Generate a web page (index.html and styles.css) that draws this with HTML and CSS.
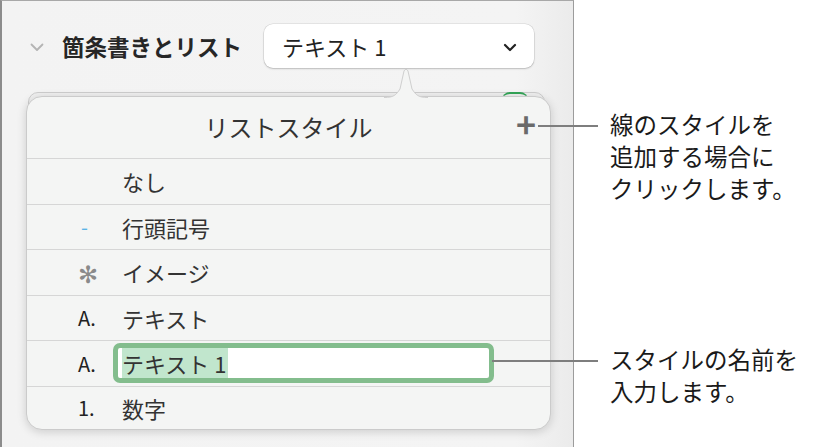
FILE: index.html
```html
<!DOCTYPE html>
<html lang="ja">
<head>
    <meta charset="UTF-8">
    <title>リストスタイル</title>
    <link rel="stylesheet" href="styles.css">
</head>
<body>

<div class="page">
    <div class="panel">
        <div class="header">
            <svg class="disclosure" width="14" height="9" viewBox="0 0 14 9">
                <path d="M1.5 1.5 L7 7 L12.5 1.5" fill="none" stroke="#b4b4b4" stroke-width="1.8" stroke-linecap="round" stroke-linejoin="round"/>
            </svg>
            <span class="section-title">箇条書きとリスト</span>
            <div class="popup">
                <span>テキスト 1</span>
                <svg width="14" height="9" viewBox="0 0 14 9">
                    <path d="M2 2 L7 7 L12 2" fill="none" stroke="#222" stroke-width="2.2" stroke-linecap="round" stroke-linejoin="round"/>
                </svg>
            </div>
        </div>
        <div class="behind"><span class="toggle"></span></div>

        <div class="popover">
            <svg class="arrow" width="44" height="30" viewBox="0 0 44 30">
                <path d="M0 29.5 C10 29.5 12 27 16 21 L20 3 Q22 -0.5 24 3 L28 21 C32 27 34 29.5 44 29.5" fill="#f4f5f4" stroke="#cfcfcf" stroke-width="1"/>
            </svg>
            <div class="pop-title">
                <span>リストスタイル</span>
                <span class="add">+</span>
            </div>
            <div class="row"><span class="marker"></span><span>なし</span></div>
            <div class="row"><span class="marker dash">-</span><span>行頭記号</span></div>
            <div class="row"><span class="marker star">✻</span><span>イメージ</span></div>
            <div class="row"><span class="marker">A.</span><span>テキスト</span></div>
            <div class="row editing">
                <span class="marker">A.</span>
                <div class="field"><span class="selected">テキスト 1</span></div>
            </div>
            <div class="row"><span class="marker">1.</span><span>数字</span></div>
        </div>
    </div>

    <div class="note note-add">
        <span class="leader" style="width: 60px"></span>
        <div class="note-text">
            <div>線のスタイルを</div>
            <div>追加する場合に</div>
            <div>クリックします。</div>
        </div>
    </div>
    <div class="note note-name">
        <span class="leader" style="width: 106px"></span>
        <div class="note-text">
            <div>スタイルの名前を</div>
            <div>入力します。</div>
        </div>
    </div>
</div>

</body>
</html>
```

FILE: styles.css
```css
body {
    margin: 0;
    background-color: #fff;
    font-family: "Noto Sans CJK JP", "Noto Sans", sans-serif;
    color: #222;
}

.page {
    position: relative;
    width: 825px;
    height: 447px;
    overflow: hidden;
}

.panel {
    position: relative;
    width: 574px;
    height: 447px;
    box-sizing: border-box;
    background: linear-gradient(to right, #f3f3f3 0%, #f4f4f4 90%, #ebebeb 100%);
    border-left: 2px solid #8c8c8c;
    border-top: 1px solid #a8a8a8;
    border-right: 1px solid #9c9c9c;
}

.header {
    display: flex;
    align-items: center;
    padding: 23px 0 0 28px;
    height: 44px;
}

.disclosure {
    margin-top: 2px;
}

.section-title {
    margin-left: 18px;
    font-size: 22.5px;
    font-weight: bold;
    color: #262626;
}

.popup {
    display: flex;
    align-items: center;
    justify-content: space-between;
    margin-left: 22px;
    width: 270px;
    height: 44px;
    box-sizing: border-box;
    padding: 0 17px 0 18px;
    background-color: #fff;
    border-radius: 9px;
    box-shadow: 0 0 0 0.5px rgba(0, 0, 0, 0.12), 0 1px 2px rgba(0, 0, 0, 0.18);
    font-size: 22px;
    color: #222;
}

.popup svg {
    margin-top: 3px;
}

.behind {
    position: relative;
    margin: 24px 28px 0 26px;
    height: 30px;
    border: 1px solid #cdcdcd;
    border-radius: 10px;
    background-color: #efefef;
}

.toggle {
    position: absolute;
    right: 16px;
    top: -1px;
    width: 26px;
    height: 10px;
    border-top: 2px solid #33a457;
    border-radius: 8px 8px 0 0;
}

.popover {
    position: absolute;
    left: 24px;
    top: 95px;
    width: 523px;
    background-color: #f4f5f4;
    border: 1px solid #cbcbcb;
    border-radius: 16px;
    box-shadow: 0 2px 10px rgba(0, 0, 0, 0.16);
}

.arrow {
    position: absolute;
    left: 357px;
    top: -29px;
}

.pop-title {
    position: relative;
    display: flex;
    align-items: center;
    justify-content: center;
    height: 59px;
    padding-bottom: 2px;
    font-size: 24px;
    color: #333;
}

.add {
    position: absolute;
    right: 14px;
    top: 10px;
    font-size: 34px;
    font-weight: bold;
    line-height: 34px;
    color: #6a6a6a;
}

.row {
    display: flex;
    align-items: center;
    height: 44.5px;
    padding-left: 51px;
    border-top: 1px solid #d6d6d6;
    font-size: 22px;
    color: #333;
}

.row:last-child {
    height: 42px;
}

.marker {
    width: 44px;
    font-size: 20px;
    color: #222;
}

.dash {
    color: #5ab4e6;
    padding-left: 3px;
    box-sizing: border-box;
}

.star {
    font-size: 24px;
    color: #8a8a8a;
}

.editing .marker {
    width: 35px;
}

.field {
    display: flex;
    align-items: center;
    width: 381px;
    height: 40px;
    box-sizing: border-box;
    padding-left: 4px;
    background-color: #fff;
    border: 5px solid #83bd8d;
    border-radius: 7px;
}

.selected {
    background-color: #c1e6cd;
    color: #333;
    line-height: 30px;
    padding-right: 2px;
}

.note {
    position: absolute;
    display: flex;
    align-items: flex-start;
}

.note-add {
    top: 108px;
    left: 538px;
}

.note-name {
    top: 343px;
    left: 492px;
}

.leader {
    display: block;
    margin-top: 17px;
    height: 1.5px;
    background-color: #7e7e7e;
}

.note-text {
    display: flex;
    flex-direction: column;
    margin-left: 12px;
    font-size: 23.5px;
    line-height: 32px;
    color: #1a1a1a;
}

.note-text div {
    height: 32px;
    white-space: nowrap;
}
```
